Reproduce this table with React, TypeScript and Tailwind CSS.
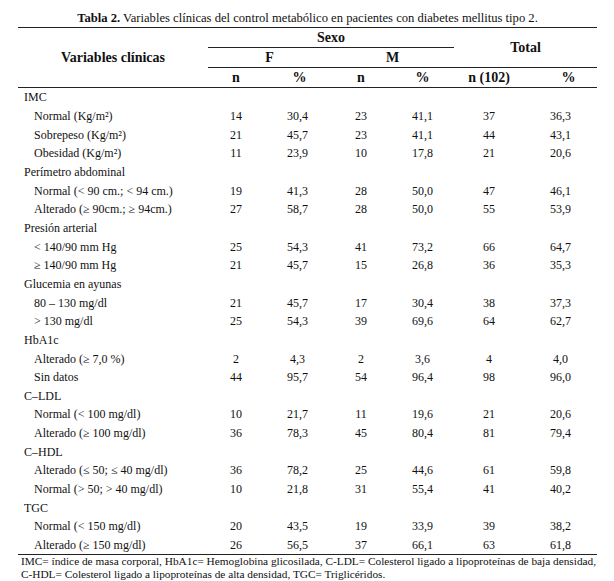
type Row = { label: string; group?: boolean; v?: string[] };

const rows: Row[] = [
  { label: "IMC", group: true },
  { label: "Normal (Kg/m²)", v: ["14", "30,4", "23", "41,1", "37", "36,3"] },
  { label: "Sobrepeso (Kg/m²)", v: ["21", "45,7", "23", "41,1", "44", "43,1"] },
  { label: "Obesidad (Kg/m²)", v: ["11", "23,9", "10", "17,8", "21", "20,6"] },
  { label: "Perímetro abdominal", group: true },
  { label: "Normal (< 90 cm.; < 94 cm.)", v: ["19", "41,3", "28", "50,0", "47", "46,1"] },
  { label: "Alterado (≥ 90cm.; ≥ 94cm.)", v: ["27", "58,7", "28", "50,0", "55", "53,9"] },
  { label: "Presión arterial", group: true },
  { label: "< 140/90 mm Hg", v: ["25", "54,3", "41", "73,2", "66", "64,7"] },
  { label: "≥ 140/90 mm Hg", v: ["21", "45,7", "15", "26,8", "36", "35,3"] },
  { label: "Glucemia en ayunas", group: true },
  { label: "80 – 130 mg/dl", v: ["21", "45,7", "17", "30,4", "38", "37,3"] },
  { label: "> 130 mg/dl", v: ["25", "54,3", "39", "69,6", "64", "62,7"] },
  { label: "HbA1c", group: true },
  { label: "Alterado (≥ 7,0 %)", v: ["2", "4,3", "2", "3,6", "4", "4,0"] },
  { label: "Sin datos", v: ["44", "95,7", "54", "96,4", "98", "96,0"] },
  { label: "C–LDL", group: true },
  { label: "Normal (< 100 mg/dl)", v: ["10", "21,7", "11", "19,6", "21", "20,6"] },
  { label: "Alterado (≥ 100 mg/dl)", v: ["36", "78,3", "45", "80,4", "81", "79,4"] },
  { label: "C–HDL", group: true },
  { label: "Alterado (≤ 50; ≤ 40 mg/dl)", v: ["36", "78,2", "25", "44,6", "61", "59,8"] },
  { label: "Normal (> 50; > 40 mg/dl)", v: ["10", "21,8", "31", "55,4", "41", "40,2"] },
  { label: "TGC", group: true },
  { label: "Normal (< 150 mg/dl)", v: ["20", "43,5", "19", "33,9", "39", "38,2"] },
  { label: "Alterado (≥ 150 mg/dl)", v: ["26", "56,5", "37", "66,1", "63", "61,8"] },
];

const cols = "grid-cols-[190px_56px_67px_60px_63px_70px_73px]";

export default function App() {
  return (
    <div className="w-[614px] h-[581px] bg-white pl-[18px] pr-[17px] pt-[11px] font-['Liberation_Serif',serif] text-[#111]">
      <div className="text-center text-[12.6px] leading-[14px] mb-[2px] whitespace-nowrap">
        <span className="font-bold">Tabla 2.</span> Variables clínicas del control metabólico en pacientes con diabetes mellitus tipo 2.
      </div>

      {/* encabezado */}
      <div className={`grid ${cols} grid-rows-[20px_20px_19px] border-y border-[#222] text-[14px] font-bold leading-[16px]`}>
        <div className="row-span-3 flex items-center justify-center">Variables clínicas</div>
        <div className="col-span-4 flex items-center justify-center border-b border-[#222]">Sexo</div>
        <div className="col-span-2 row-span-2 flex items-center justify-center border-b border-[#222] pt-[1px]">Total</div>
        <div className="col-span-2 flex items-center justify-center border-b border-[#222]">F</div>
        <div className="col-span-2 flex items-center justify-center border-b border-[#222]">M</div>
        <div className="flex items-center justify-center">n</div>
        <div className="flex items-center justify-center pl-[4px]">%</div>
        <div className="flex items-center justify-center">n</div>
        <div className="flex items-center justify-center">%</div>
        <div className="flex items-center justify-center">n (102)</div>
        <div className="flex items-center justify-center pl-[16px]">%</div>
      </div>

      {/* cuerpo */}
      <div className={`grid ${cols} auto-rows-[18.67px] items-center border-b border-[#222] text-[12px] leading-[14px]`}>
        {rows.map((r) => (
          <div key={r.label} className="contents">
            <div className={r.group ? "pl-[6px]" : "pl-[16px]"}>{r.label}</div>
            {(r.v ?? ["", "", "", "", "", ""]).map((x, i) => (
              <div key={i} className="text-center">
                {x}
              </div>
            ))}
          </div>
        ))}
      </div>

      <div className="pl-[3px] pr-[6px] text-[11.3px] leading-[13px]">
        <div className="text-justify [text-align-last:justify] whitespace-nowrap">
          IMC= índice de masa corporal, HbA1c= Hemoglobina glicosilada, C-LDL= Colesterol ligado a lipoproteínas de baja densidad,
        </div>
        <div>C-HDL= Colesterol ligado a lipoproteínas de alta densidad, TGC= Triglicéridos.</div>
      </div>
    </div>
  );
}
